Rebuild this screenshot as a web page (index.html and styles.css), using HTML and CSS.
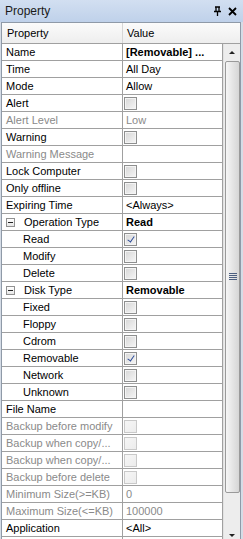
FILE: index.html
```html
<!DOCTYPE html>
<html>
  <head>
    <meta charset="UTF-8" />
    <title>Property</title>
    <link rel="stylesheet" href="styles.css">
  </head>
  <body>
    <div class="window">
      <div class="titlebar">
        <span class="title">Property</span>
        <span class="tools">
          <svg class="pin" width="9" height="10" viewBox="0 0 9 10">
            <path d="M2 1H7M3 1V5M6 1V5M1 5.5H8M4.5 6V10" stroke="#000" stroke-width="1.3" fill="none"/>
          </svg>
          <svg class="close" width="9" height="9" viewBox="0 0 9 9">
            <path d="M1 1L8 8M8 1L1 8" stroke="#000" stroke-width="1.8"/>
          </svg>
        </span>
      </div>

      <div class="panel">
        <div class="header">
          <div class="hcell name">Property</div>
          <div class="hcell val">Value</div>
        </div>

        <div class="body">
          <div class="rows">
            <div class="row"><div class="name">Name</div><div class="val bold">[Removable] ...</div></div>
            <div class="row"><div class="name">Time</div><div class="val">All Day</div></div>
            <div class="row"><div class="name">Mode</div><div class="val">Allow</div></div>
            <div class="row"><div class="name">Alert</div><div class="val"><span class="check"></span></div></div>
            <div class="row dis"><div class="name">Alert Level</div><div class="val">Low</div></div>
            <div class="row"><div class="name">Warning</div><div class="val"><span class="check"></span></div></div>
            <div class="row dis"><div class="name">Warning Message</div><div class="val"></div></div>
            <div class="row"><div class="name">Lock Computer</div><div class="val"><span class="check"></span></div></div>
            <div class="row"><div class="name">Only offline</div><div class="val"><span class="check"></span></div></div>
            <div class="row"><div class="name">Expiring Time</div><div class="val">&lt;Always&gt;</div></div>
            <div class="row"><div class="name group"><span class="minus"></span>Operation Type</div><div class="val bold">Read</div></div>
            <div class="row sub"><div class="name">Read</div><div class="val"><span class="check on"></span></div></div>
            <div class="row sub"><div class="name">Modify</div><div class="val"><span class="check"></span></div></div>
            <div class="row sub"><div class="name">Delete</div><div class="val"><span class="check"></span></div></div>
            <div class="row"><div class="name group"><span class="minus"></span>Disk Type</div><div class="val bold">Removable</div></div>
            <div class="row sub"><div class="name">Fixed</div><div class="val"><span class="check"></span></div></div>
            <div class="row sub"><div class="name">Floppy</div><div class="val"><span class="check"></span></div></div>
            <div class="row sub"><div class="name">Cdrom</div><div class="val"><span class="check"></span></div></div>
            <div class="row sub"><div class="name">Removable</div><div class="val"><span class="check on"></span></div></div>
            <div class="row sub"><div class="name">Network</div><div class="val"><span class="check"></span></div></div>
            <div class="row sub"><div class="name">Unknown</div><div class="val"><span class="check"></span></div></div>
            <div class="row"><div class="name">File Name</div><div class="val"></div></div>
            <div class="row dis"><div class="name">Backup before modify</div><div class="val"><span class="check off"></span></div></div>
            <div class="row dis"><div class="name">Backup when copy/...</div><div class="val"><span class="check off"></span></div></div>
            <div class="row dis"><div class="name">Backup when copy/...</div><div class="val"><span class="check off"></span></div></div>
            <div class="row dis"><div class="name">Backup before delete</div><div class="val"><span class="check off"></span></div></div>
            <div class="row dis"><div class="name">Minimum Size(&gt;=KB)</div><div class="val">0</div></div>
            <div class="row dis"><div class="name">Maximum Size(&lt;=KB)</div><div class="val">100000</div></div>
            <div class="row"><div class="name">Application</div><div class="val">&lt;All&gt;</div></div>
            <div class="row"><div class="name"></div><div class="val"></div></div>
          </div>

          <div class="scrollbar">
            <div class="arrow"><span class="up"></span></div>
            <div class="track">
              <div class="thumb">
                <span class="grip"></span>
              </div>
            </div>
            <div class="arrow"><span class="down"></span></div>
          </div>
        </div>
      </div>
    </div>
  </body>
</html>
```

FILE: styles.css
```css
* {
  box-sizing: border-box;
}

body {
  margin: 0;
  background: #d5dce6;
  font-family: "Liberation Sans", Arial, sans-serif;
  font-size: 11px;
  color: #000;
  overflow: hidden;
}

.window {
  width: 243px;
  height: 539px;
  overflow: hidden;
}

.titlebar {
  height: 22px;
  display: flex;
  align-items: center;
  justify-content: space-between;
  padding: 0 6px 0 5px;
  background: linear-gradient(#d2dff1, #bfd1ea);
}

.title {
  font-size: 12px;
  color: #1a1a1a;
}

.tools {
  display: flex;
  align-items: center;
  gap: 6px;
}

.panel {
  margin-left: 1px;
  width: 240px;
  border: 1px solid #8f9aa8;
  border-bottom: none;
  background: #fff;
}

.header {
  display: flex;
  height: 21px;
  border-bottom: 1px solid #a0a0a0;
  background: linear-gradient(#fbfbfb, #eeeeee);
}

.hcell {
  line-height: 20px;
}

.hcell.name {
  width: 121px;
  padding-left: 5px;
  border-right: 1px solid #d6d6d6;
}

.hcell.val {
  padding-left: 4px;
}

.body {
  display: flex;
  height: 500px;
}

.rows {
  width: 221px;
  overflow: hidden;
}

.row {
  display: flex;
  height: 17px;
  border-bottom: 1px solid #a0a0a0;
  border-right: 1px solid #a0a0a0;
  line-height: 16px;
}

.row .name {
  width: 121px;
  padding-left: 4px;
  border-right: 1px solid #a0a0a0;
  white-space: nowrap;
  overflow: hidden;
  display: flex;
  align-items: center;
}

.row .val {
  flex: 1;
  padding-left: 3px;
  white-space: nowrap;
  overflow: hidden;
  display: flex;
  align-items: center;
}

.row.sub .name {
  padding-left: 21px;
}

.row.dis {
  color: #8a8a8a;
}

.bold {
  font-weight: bold;
}

.minus {
  width: 9px;
  height: 9px;
  margin: 0 9px 0 0;
  border: 1px solid #919191;
  background: linear-gradient(#ffffff, #e6e6e6);
  position: relative;
}

.minus::after {
  content: "";
  position: absolute;
  left: 1px;
  top: 3px;
  width: 5px;
  height: 1px;
  background: #222;
}

.check {
  display: block;
  width: 13px;
  height: 13px;
  margin-left: -2px;
  border: 1px solid #8e8f8f;
  background: linear-gradient(135deg, #d6d6d6, #f6f6f6);
  box-shadow: inset 0 0 0 1px #f4f4f4;
}

.check.on {
  position: relative;
}

.check.on::after {
  content: "";
  position: absolute;
  left: 4px;
  top: 1px;
  width: 3px;
  height: 6px;
  border-right: 1.5px solid #2a4a98;
  border-bottom: 1.5px solid #2a4a98;
  transform: rotate(35deg);
}

.check.off {
  border-color: #c9c9c9;
  background: linear-gradient(135deg, #f6f6f6, #ececec);
  box-shadow: none;
}

.scrollbar {
  width: 17px;
  display: flex;
  flex-direction: column;
  background: #ededed;
  border-left: 1px solid #e2e2e2;
}

.arrow {
  height: 17px;
  display: flex;
  align-items: center;
  justify-content: center;
}

.up {
  border-left: 3px solid transparent;
  border-right: 3px solid transparent;
  border-bottom: 3px solid #222;
}

.down {
  border-left: 3px solid transparent;
  border-right: 3px solid transparent;
  border-top: 3px solid #222;
}

.track {
  flex: 1;
  padding: 0 0 0 1px;
}

.thumb {
  height: 432px;
  border: 1px solid #9a9a9a;
  border-radius: 2px;
  background: linear-gradient(to right, #f6f6f6, #e2e2e2 60%, #d6d6d6);
  display: flex;
  align-items: center;
  justify-content: center;
}

.grip {
  width: 8px;
  height: 8px;
  background: repeating-linear-gradient(#4c5f80 0 1px, transparent 1px 2px);
}
```
